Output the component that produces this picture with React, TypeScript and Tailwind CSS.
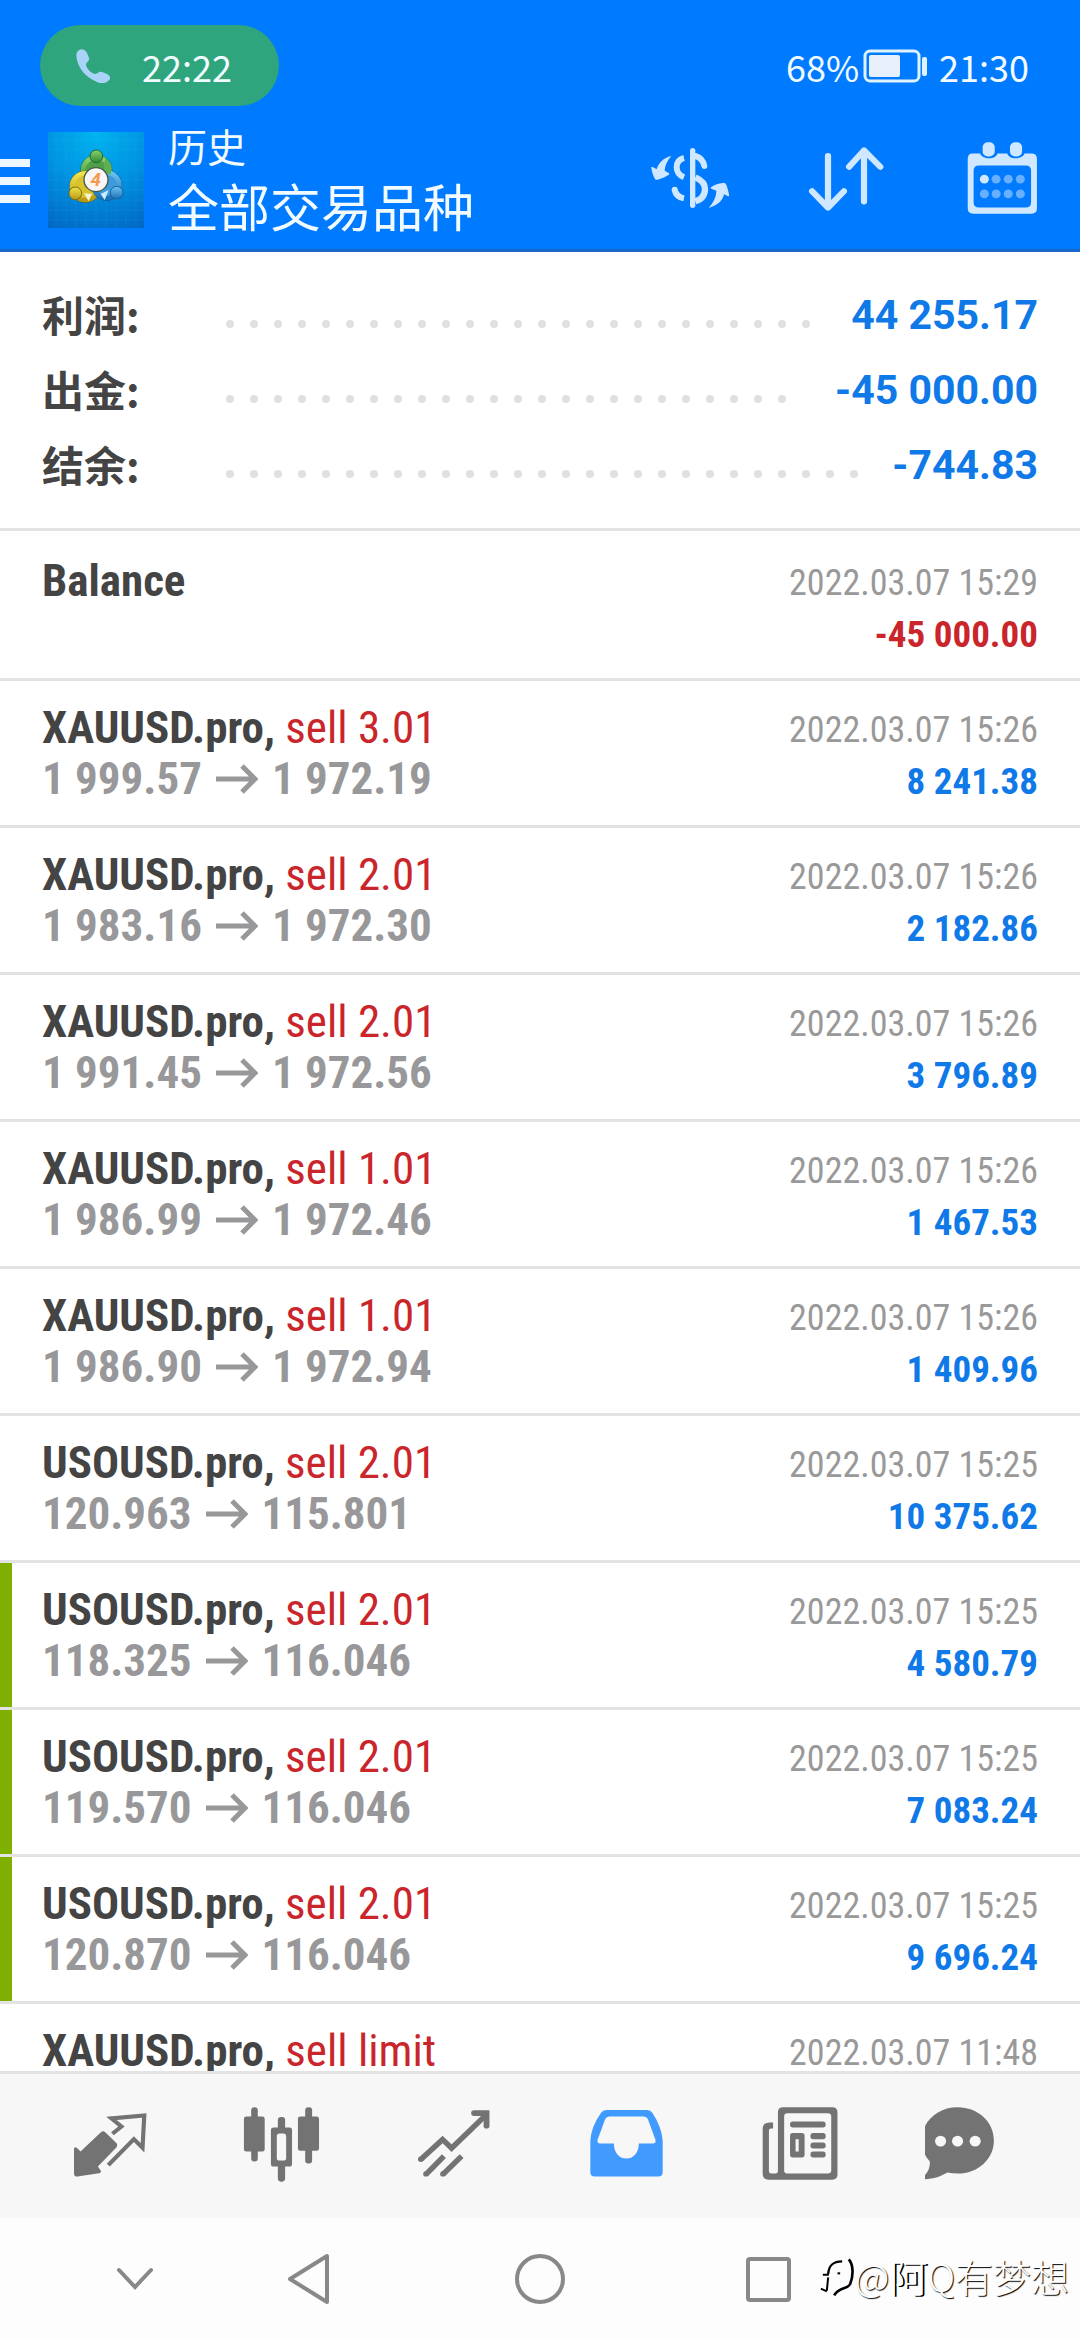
import type { ReactNode } from "react";

type Deal = {
  symbol: string;
  action?: string;
  from?: string;
  to?: string;
  time: string;
  amount: string;
  loss?: boolean;
  marked?: boolean;
};

const summary = [
  { label: "利润:", value: "44 255.17" },
  { label: "出金:", value: "-45 000.00" },
  { label: "结余:", value: "-744.83" },
];

const deals: Deal[] = [
  { symbol: "Balance", time: "2022.03.07 15:29", amount: "-45 000.00", loss: true },
  { symbol: "XAUUSD.pro,", action: "sell 3.01", from: "1 999.57", to: "1 972.19", time: "2022.03.07 15:26", amount: "8 241.38" },
  { symbol: "XAUUSD.pro,", action: "sell 2.01", from: "1 983.16", to: "1 972.30", time: "2022.03.07 15:26", amount: "2 182.86" },
  { symbol: "XAUUSD.pro,", action: "sell 2.01", from: "1 991.45", to: "1 972.56", time: "2022.03.07 15:26", amount: "3 796.89" },
  { symbol: "XAUUSD.pro,", action: "sell 1.01", from: "1 986.99", to: "1 972.46", time: "2022.03.07 15:26", amount: "1 467.53" },
  { symbol: "XAUUSD.pro,", action: "sell 1.01", from: "1 986.90", to: "1 972.94", time: "2022.03.07 15:26", amount: "1 409.96" },
  { symbol: "USOUSD.pro,", action: "sell 2.01", from: "120.963", to: "115.801", time: "2022.03.07 15:25", amount: "10 375.62" },
  { symbol: "USOUSD.pro,", action: "sell 2.01", from: "118.325", to: "116.046", time: "2022.03.07 15:25", amount: "4 580.79", marked: true },
  { symbol: "USOUSD.pro,", action: "sell 2.01", from: "119.570", to: "116.046", time: "2022.03.07 15:25", amount: "7 083.24", marked: true },
  { symbol: "USOUSD.pro,", action: "sell 2.01", from: "120.870", to: "116.046", time: "2022.03.07 15:25", amount: "9 696.24", marked: true },
  { symbol: "XAUUSD.pro,", action: "sell limit", time: "2022.03.07 11:48", amount: "" },
];

function AppLogo() {
  return (
    <svg viewBox="0 0 288 288" className="mt-1.5 ml-[18px] size-24 shrink-0" aria-hidden="true">
      <defs>
        <radialGradient id="sky" cx="0.5" cy="0" r="1.1">
          <stop offset="0" stopColor="#00b4f0" />
          <stop offset="0.5" stopColor="#0092e0" />
          <stop offset="1" stopColor="#0068c4" />
        </radialGradient>
        <linearGradient id="green" x1="0" y1="0" x2="0" y2="1">
          <stop offset="0" stopColor="#8ed06c" />
          <stop offset="1" stopColor="#2f8a34" />
        </linearGradient>
        <linearGradient id="yellow" x1="0" y1="0" x2="0" y2="1">
          <stop offset="0" stopColor="#f0e34c" />
          <stop offset="1" stopColor="#b99812" />
        </linearGradient>
        <linearGradient id="blue" x1="0" y1="0" x2="0" y2="1">
          <stop offset="0" stopColor="#6cc4f2" />
          <stop offset="1" stopColor="#1c72b8" />
        </linearGradient>
      </defs>
      <rect width="288" height="288" fill="url(#sky)" />
      <path
        d="M24 0v288M54 0v288M84 0v288M114 0v288M144 0v288M174 0v288M204 0v288M234 0v288M264 0v288M0 24h288M0 54h288M0 84h288M0 114h288M0 144h288M0 174h288M0 204h288M0 234h288M0 264h288"
        stroke="#5cc8ff"
        strokeOpacity="0.14"
        strokeWidth="2"
      />
      <circle cx="145" cy="116" r="44" fill="#4fa047" stroke="#1d5b33" strokeWidth="8" />
      <circle cx="145" cy="116" r="40" fill="none" stroke="url(#green)" strokeWidth="14" />
      <circle cx="112" cy="164" r="44" fill="#d9c22c" stroke="#5d5a1a" strokeWidth="8" />
      <circle cx="112" cy="164" r="40" fill="none" stroke="url(#yellow)" strokeWidth="14" />
      <circle cx="176" cy="160" r="42" fill="#3d9bdc" stroke="#134f86" strokeWidth="8" />
      <circle cx="176" cy="160" r="38" fill="none" stroke="url(#blue)" strokeWidth="14" />
      <path d="M172 78c14 12 20 30 16 50l-22-8z" fill="#5eb052" />
      <path d="M108 184l24 2-10 22z" fill="#f4f6cf" />
      <path d="M158 186l24-12-12 30z" fill="#c9ecff" />
      <circle cx="145" cy="73" r="19" fill="url(#green)" stroke="#1f6a31" strokeWidth="3" />
      <circle cx="82" cy="184" r="19" fill="url(#yellow)" stroke="#7d6c14" strokeWidth="3" />
      <circle cx="206" cy="182" r="19" fill="url(#blue)" stroke="#1a609c" strokeWidth="3" />
      <circle cx="144" cy="143" r="36" fill="#fbf6f6" stroke="#3d5a50" strokeWidth="4" />
      <text x="143" y="163" textAnchor="middle" className="font-[Roboto] text-[56px] font-bold italic" fill="#f2994e">
        4
      </text>
    </svg>
  );
}

function ExchangeIcon() {
  return (
    <svg viewBox="0 0 300 270" className="h-[90px] w-[100px]" fill="none" stroke="#cfe7ff" aria-hidden="true">
      <path d="M158 44v164" strokeWidth="16" strokeLinecap="round" />
      <path d="M132 66C116 70 110 82 110 94c0 14 8 24 22 30" strokeWidth="18" />
      <path d="M166 60c14 4 24 14 27 30" strokeWidth="18" strokeLinecap="round" />
      <path d="M104 162c3 14 12 22 28 25" strokeWidth="18" />
      <circle cx="104" cy="161" r="9" fill="#cfe7ff" stroke="none" />
      <path d="M166 124c18 8 29 18 29 34 0 18-10 32-29 38" strokeWidth="19" />
      <path
        d="M94 60C70 66 56 80 50 100l-12-7c-3-1-5 0-4 4 2 12 6 24 11 32 2 3 5 3 8 2 12-3 22-8 32-14 4-2 4-4 1-6l-12-7c0-14 8-30 20-44z"
        fill="#cfe7ff"
        stroke="none"
      />
      <path
        d="M206 216c20-6 42-18 46-41l11 5c3 2 5 0 4-4-2-12-5-22-9-31-2-4-5-5-9-4-14 1-25 5-35 12-3 2-3 4 0 5l15 6c0 18-8 34-23 52z"
        fill="#cfe7ff"
        stroke="none"
      />
    </svg>
  );
}

function SortIcon() {
  return (
    <svg viewBox="758 410 260 260" preserveAspectRatio="none" className="h-[87px] w-[90px]" fill="none" stroke="#cfe7ff" strokeWidth="18" strokeLinecap="round" strokeLinejoin="round" aria-hidden="true">
      <path d="M836 470v154M790 575l46 49 46-49M940 606V453M897 502l43-49 47 49" />
    </svg>
  );
}

function CalendarIcon() {
  return (
    <svg viewBox="1212 410 260 260" preserveAspectRatio="none" className="h-[87px] w-[90px]" fill="#cfe7ff" aria-hidden="true">
      <path
        fillRule="evenodd"
        d="M1257 462h22c4 16 42 22 50 0h28c8 22 46 16 50 0h20q16 0 16 16v148q0 16-16 16h-168q-16 0-16-16V478q0-16 14-16zM1276 498q-16 0-16 16v94q0 16 16 16h134q16 0 16-16v-94q0-16-16-16z"
      />
      <rect x="1286" y="429" width="35" height="42" rx="15" />
      <rect x="1365" y="429" width="35" height="42" rx="15" />
      <circle cx="1291" cy="539" r="13" />
      <g opacity="0.5">
        <circle cx="1325" cy="539" r="13" />
        <circle cx="1360" cy="539" r="13" />
        <circle cx="1395" cy="539" r="13" />
        <circle cx="1291" cy="583" r="13" />
        <circle cx="1325" cy="583" r="13" />
        <circle cx="1360" cy="583" r="13" />
        <circle cx="1395" cy="583" r="13" />
      </g>
    </svg>
  );
}

function NavIcon({ viewBox, children }: { viewBox: string; children: ReactNode }) {
  return (
    <svg viewBox={viewBox} preserveAspectRatio="none" className="h-[87px] w-[90px]" aria-hidden="true">
      {children}
    </svg>
  );
}

const tabs: { name: string; icon: ReactNode }[] = [
  {
    name: "行情",
    icon: (
      <NavIcon viewBox="189 128 260 260">
        <path
          d="M292 216q7-7 14 0l32 32q5 6 0 12l-54 58 8 12q3 7-5 8l-62 10q-10 1-10-9v-74q1-8 8-3l11 11z"
          fill="#737373"
        />
        <path d="M326 220l26-22-29-24 95-9-5 97-25-26-74 78" fill="none" stroke="#737373" strokeWidth="12" />
      </NavIcon>
    ),
  },
  {
    name: "图表",
    icon: (
      <NavIcon viewBox="689 128 260 260">
        <g fill="#737373">
          <rect x="730" y="141" width="19" height="162" rx="9" />
          <rect x="709" y="168" width="60" height="105" rx="7" />
          <rect x="886" y="141" width="20" height="168" rx="9" />
          <rect x="865" y="168" width="61" height="103" rx="7" />
          <rect x="807" y="170" width="21" height="40" rx="9" />
          <rect x="807" y="306" width="21" height="57" rx="9" />
          <path
            fillRule="evenodd"
            d="M795 201h45q8 0 8 8v101q0 8-8 8h-45q-8 0-8-8V209q0-8 8-8zM812 219q-8 0-8 8v65q0 8 8 8h11q8 0 8-8v-65q0-8-8-8z"
          />
        </g>
      </NavIcon>
    ),
  },
  {
    name: "交易",
    icon: (
      <NavIcon viewBox="1188 128 260 260">
        <g fill="none" stroke="#737373" strokeWidth="16">
          <path d="M1222 297l63-60 26 26 96-96" />
          <path d="M1376 158h36v38" strokeLinecap="round" strokeWidth="17" />
          <path d="M1237 341l52-54M1286 341l54-54" />
          <g fill="#737373" stroke="none">
            <circle cx="1222" cy="296" r="8" />
            <circle cx="1237" cy="340" r="8" />
            <circle cx="1286" cy="340" r="8" />
          </g>
        </g>
      </NavIcon>
    ),
  },
  {
    name: "历史",
    icon: (
      <NavIcon viewBox="120 128 260 260">
        <path
          fillRule="evenodd"
          fill="#419bff"
          d="M193 149h118q10 0 15 8 27 42 30 84v94q0 13-13 13H160q-13 0-13-13v-94q2-42 31-84 5-8 15-8zM202 168q-9 0-12 8l-22 62q-3 11 8 11h39c0 26 14 45 36 45s36-19 36-45h40q11 0 8-11l-22-62q-3-8-12-8z"
        />
      </NavIcon>
    ),
  },
  {
    name: "新闻",
    icon: (
      <NavIcon viewBox="619 128 260 260">
        <g fill="#737373">
          <path
            fillRule="evenodd"
            d="M706 141h142q15 0 15 15v186q0 15-15 15H664q-17 0-17-17V204q0-18 20-18h10v18h-6q-6 0-6 6v122q0 7 7 7h12q7 0 7-7V156q0-15 15-15zM718 159q-9 0-9 9v162q0 9 9 9h117q10 0 10-9V168q0-9-10-9z"
          />
          <rect x="726" y="183" width="103" height="18" rx="8" />
          <path fillRule="evenodd" d="M734 218h26q8 0 8 8v57q0 8-8 8h-26q-8 0-8-8v-57q0-8 8-8zM742 236v37h9v-37z" />
          <rect x="785" y="218" width="44" height="18" rx="8" />
          <rect x="785" y="246" width="44" height="18" rx="8" />
          <rect x="785" y="273" width="44" height="18" rx="8" />
        </g>
      </NavIcon>
    ),
  },
  {
    name: "消息",
    icon: (
      <NavIcon viewBox="1119 128 260 260">
        <path
          d="M1213 141c60 0 105 44 105 99s-45 99-105 99c-10 0-20-1-29-3-20 12-42 20-70 20-5 0-5-4-2-7 16-12 22-28 21-46-15-16-24-38-24-63 0-55 46-99 104-99z"
          fill="#737373"
        />
        <g fill="#f7f7f7">
          <circle cx="1164" cy="242" r="16" />
          <circle cx="1213" cy="242" r="16" />
          <circle cx="1264" cy="242" r="16" />
        </g>
      </NavIcon>
    ),
  },
];

function DottedLeader() {
  return (
    <div className="mt-4 mr-5 flex h-2 flex-1 flex-wrap overflow-hidden" aria-hidden="true">
      {Array.from({ length: 40 }, (_, i) => (
        <span key={i} className="flex h-2 w-6 justify-center">
          <span className="size-2 rounded-full bg-[#e0e0e0]" />
        </span>
      ))}
    </div>
  );
}

function DealRow({ deal }: { deal: Deal }) {
  return (
    <li className="border-b-3 border-[#e3e3e3]">
      <button
        type="button"
        className={
          "relative flex w-full items-start justify-between px-[42px] text-left font-['Roboto_Condensed',Roboto,sans-serif] leading-[51px] " +
          (deal.action ? "h-36 pt-[21px]" : "h-[147px] pt-6")
        }
      >
        {deal.marked && <span className="absolute inset-y-0 left-0 w-3 bg-[#7faf00]" />}
        <span className="block">
          <span className="block text-[45px]">
            <span className="font-bold text-[#444]">{deal.symbol}</span>
            {deal.action && <span className="text-[#c9252b]"> {deal.action}</span>}
          </span>
          {deal.from && (
            <span className="flex items-center text-[45px] font-bold text-[#98989a]">
              <span>{deal.from}</span>
              <svg viewBox="0 0 42 30" className="mx-[14px] h-[30px] w-[42px]" fill="none" stroke="currentColor" strokeWidth="5" role="img" aria-label="→">
                <path d="M0 15h38M26 2l13 13-13 13" />
              </svg>
              <span>{deal.to}</span>
            </span>
          )}
        </span>
        <span className="block pt-[3px] text-right">
          <span className="block text-[36px] text-[#999]">{deal.time}</span>
          <span className={deal.loss ? "block text-[37px] font-bold text-[#c9252b]" : "block text-[37px] font-bold text-[#1079e8]"}>
            {deal.amount}
          </span>
        </span>
      </button>
    </li>
  );
}

export default function App() {
  return (
    <div className="relative flex h-screen w-full flex-col overflow-hidden bg-white font-['Noto_Sans_CJK_SC',sans-serif]">
      <header className="shrink-0 border-b-3 border-[#1a68c8] bg-[#007aff] text-[#f2fbff]">
        <div className="flex h-[117px] items-start justify-between pt-[25px] pr-[51px] pl-10 text-[36px]">
          <div className="flex h-[81px] w-[239px] items-center rounded-full bg-[#2ea57d] pl-9">
            <svg viewBox="0 0 34 34" className="size-[34px]" fill="#a9d4f8" aria-hidden="true">
              <path d="M2 2c3-3 7-2 9 2l2 5c1 3-3 4-3 7 1 4 5 8 9 9 3 0 4-3 7-2l5 2c4 2 4 5 1 7-3 3-8 3-13 0C10 28 3 20 1 11 0 7 0 4 2 2z" />
            </svg>
            <time className="ml-8 leading-none">22:22</time>
          </div>
          <div className="flex h-[81px] items-center leading-none">
            <span>68%</span>
            <svg viewBox="0 0 66 36" className="mr-2.5 ml-1 h-9 w-[66px]" role="img" aria-label="电池 68%">
              <rect x="2" y="3" width="54" height="30" rx="5" fill="none" stroke="#dff3ff" strokeWidth="3" />
              <rect x="6" y="7" width="31" height="22" rx="2" fill="#e8f1fb" />
              <rect x="59" y="9" width="5" height="19" rx="2" fill="#dff3ff" />
            </svg>
            <time>21:30</time>
          </div>
        </div>
        <div className="flex items-center pb-3">
          <button type="button" aria-label="菜单" className="flex w-[30px] shrink-0 flex-col gap-[10px] pt-2">
            <span className="block h-2 bg-[#eef6ff]" />
            <span className="block h-2 bg-[#eef6ff]" />
            <span className="block h-2 bg-[#eef6ff]" />
          </button>
          <AppLogo />
          <div className="ml-6 flex-1">
            <h1 className="text-[39px] leading-[56px]">历史</h1>
            <p className="text-[51px] leading-[64px]">全部交易品种</p>
          </div>
          <div className="flex pt-2">
            <button type="button" aria-label="货币" className="flex w-[156px] justify-center">
              <ExchangeIcon />
            </button>
            <button type="button" aria-label="排序" className="flex w-[156px] justify-center">
              <SortIcon />
            </button>
            <button type="button" aria-label="日期" className="flex w-[156px] justify-center">
              <CalendarIcon />
            </button>
          </div>
        </div>
      </header>

      <main className="min-h-0 flex-1 overflow-hidden">
        <dl className="border-b-3 border-[#e3e3e3] px-[42px] pt-[26px] pb-[25px]">
          {summary.map((s) => (
            <div key={s.label} className="flex h-[75px] items-center text-[42px] font-bold">
              <dt className="w-44 pb-1 leading-none text-[#444]">{s.label}</dt>
              <DottedLeader />
              <dd className="font-[Roboto,sans-serif] text-[41px] text-[#1079e8]">{s.value}</dd>
            </div>
          ))}
        </dl>
        <ul>
          {deals.map((d, i) => (
            <DealRow key={i} deal={d} />
          ))}
        </ul>
      </main>

      <nav className="grid h-[147px] shrink-0 grid-cols-6 border-t-3 border-[#e3e3e3] bg-[#f7f7f7] px-6">
        {tabs.map((t) => (
          <button key={t.name} type="button" aria-label={t.name} className="flex items-center justify-center">
            {t.icon}
          </button>
        ))}
      </nav>

      <footer className="grid h-[122px] shrink-0 grid-cols-[174fr_173fr_290fr_167fr] bg-[#fdfdfd] pr-[228px] pl-12">
        <button type="button" aria-label="收起" className="flex items-center justify-center">
          <svg viewBox="0 0 40 24" className="h-6 w-10" fill="none" stroke="#888" strokeWidth="4" strokeLinecap="round" aria-hidden="true">
            <path d="M4 3l16 17L36 3" />
          </svg>
        </button>
        <button type="button" aria-label="返回" className="flex items-center justify-center">
          <svg viewBox="0 0 44 52" className="h-[52px] w-11" fill="none" stroke="#888" strokeWidth="4" strokeLinejoin="round" aria-hidden="true">
            <path d="M40 3v46L3 26z" />
          </svg>
        </button>
        <button type="button" aria-label="主页" className="flex items-center justify-center">
          <span className="size-[50px] rounded-full border-4 border-[#888]" />
        </button>
        <button type="button" aria-label="最近任务" className="flex items-center justify-center">
          <span className="size-[45px] rounded-sm border-4 border-[#888]" />
        </button>
      </footer>

      <div className="absolute right-[11px] bottom-[38px] flex items-center text-[38px] leading-[52px] font-light text-white [text-shadow:1px_1px_1px_#000]">
        <svg viewBox="40 74 110 120" className="mt-1 h-10 w-[37px]" fill="none" stroke="#000" aria-hidden="true">
          <path d="M70 122c2-26 14-38 42-38" strokeWidth="7" />
          <path d="M54 124h18M70 132l-4 40M48 166l18 8" strokeWidth="6" />
          <path d="M132 78c14 16 14 50 4 74-8 16-34 10-48 34" strokeWidth="8" />
          <path d="M98 120h8" strokeWidth="6" />
        </svg>
        <span>
          @<span className="[text-shadow:2px_1px_0_#000]">阿</span>Q有梦想
        </span>
      </div>
    </div>
  );
}
